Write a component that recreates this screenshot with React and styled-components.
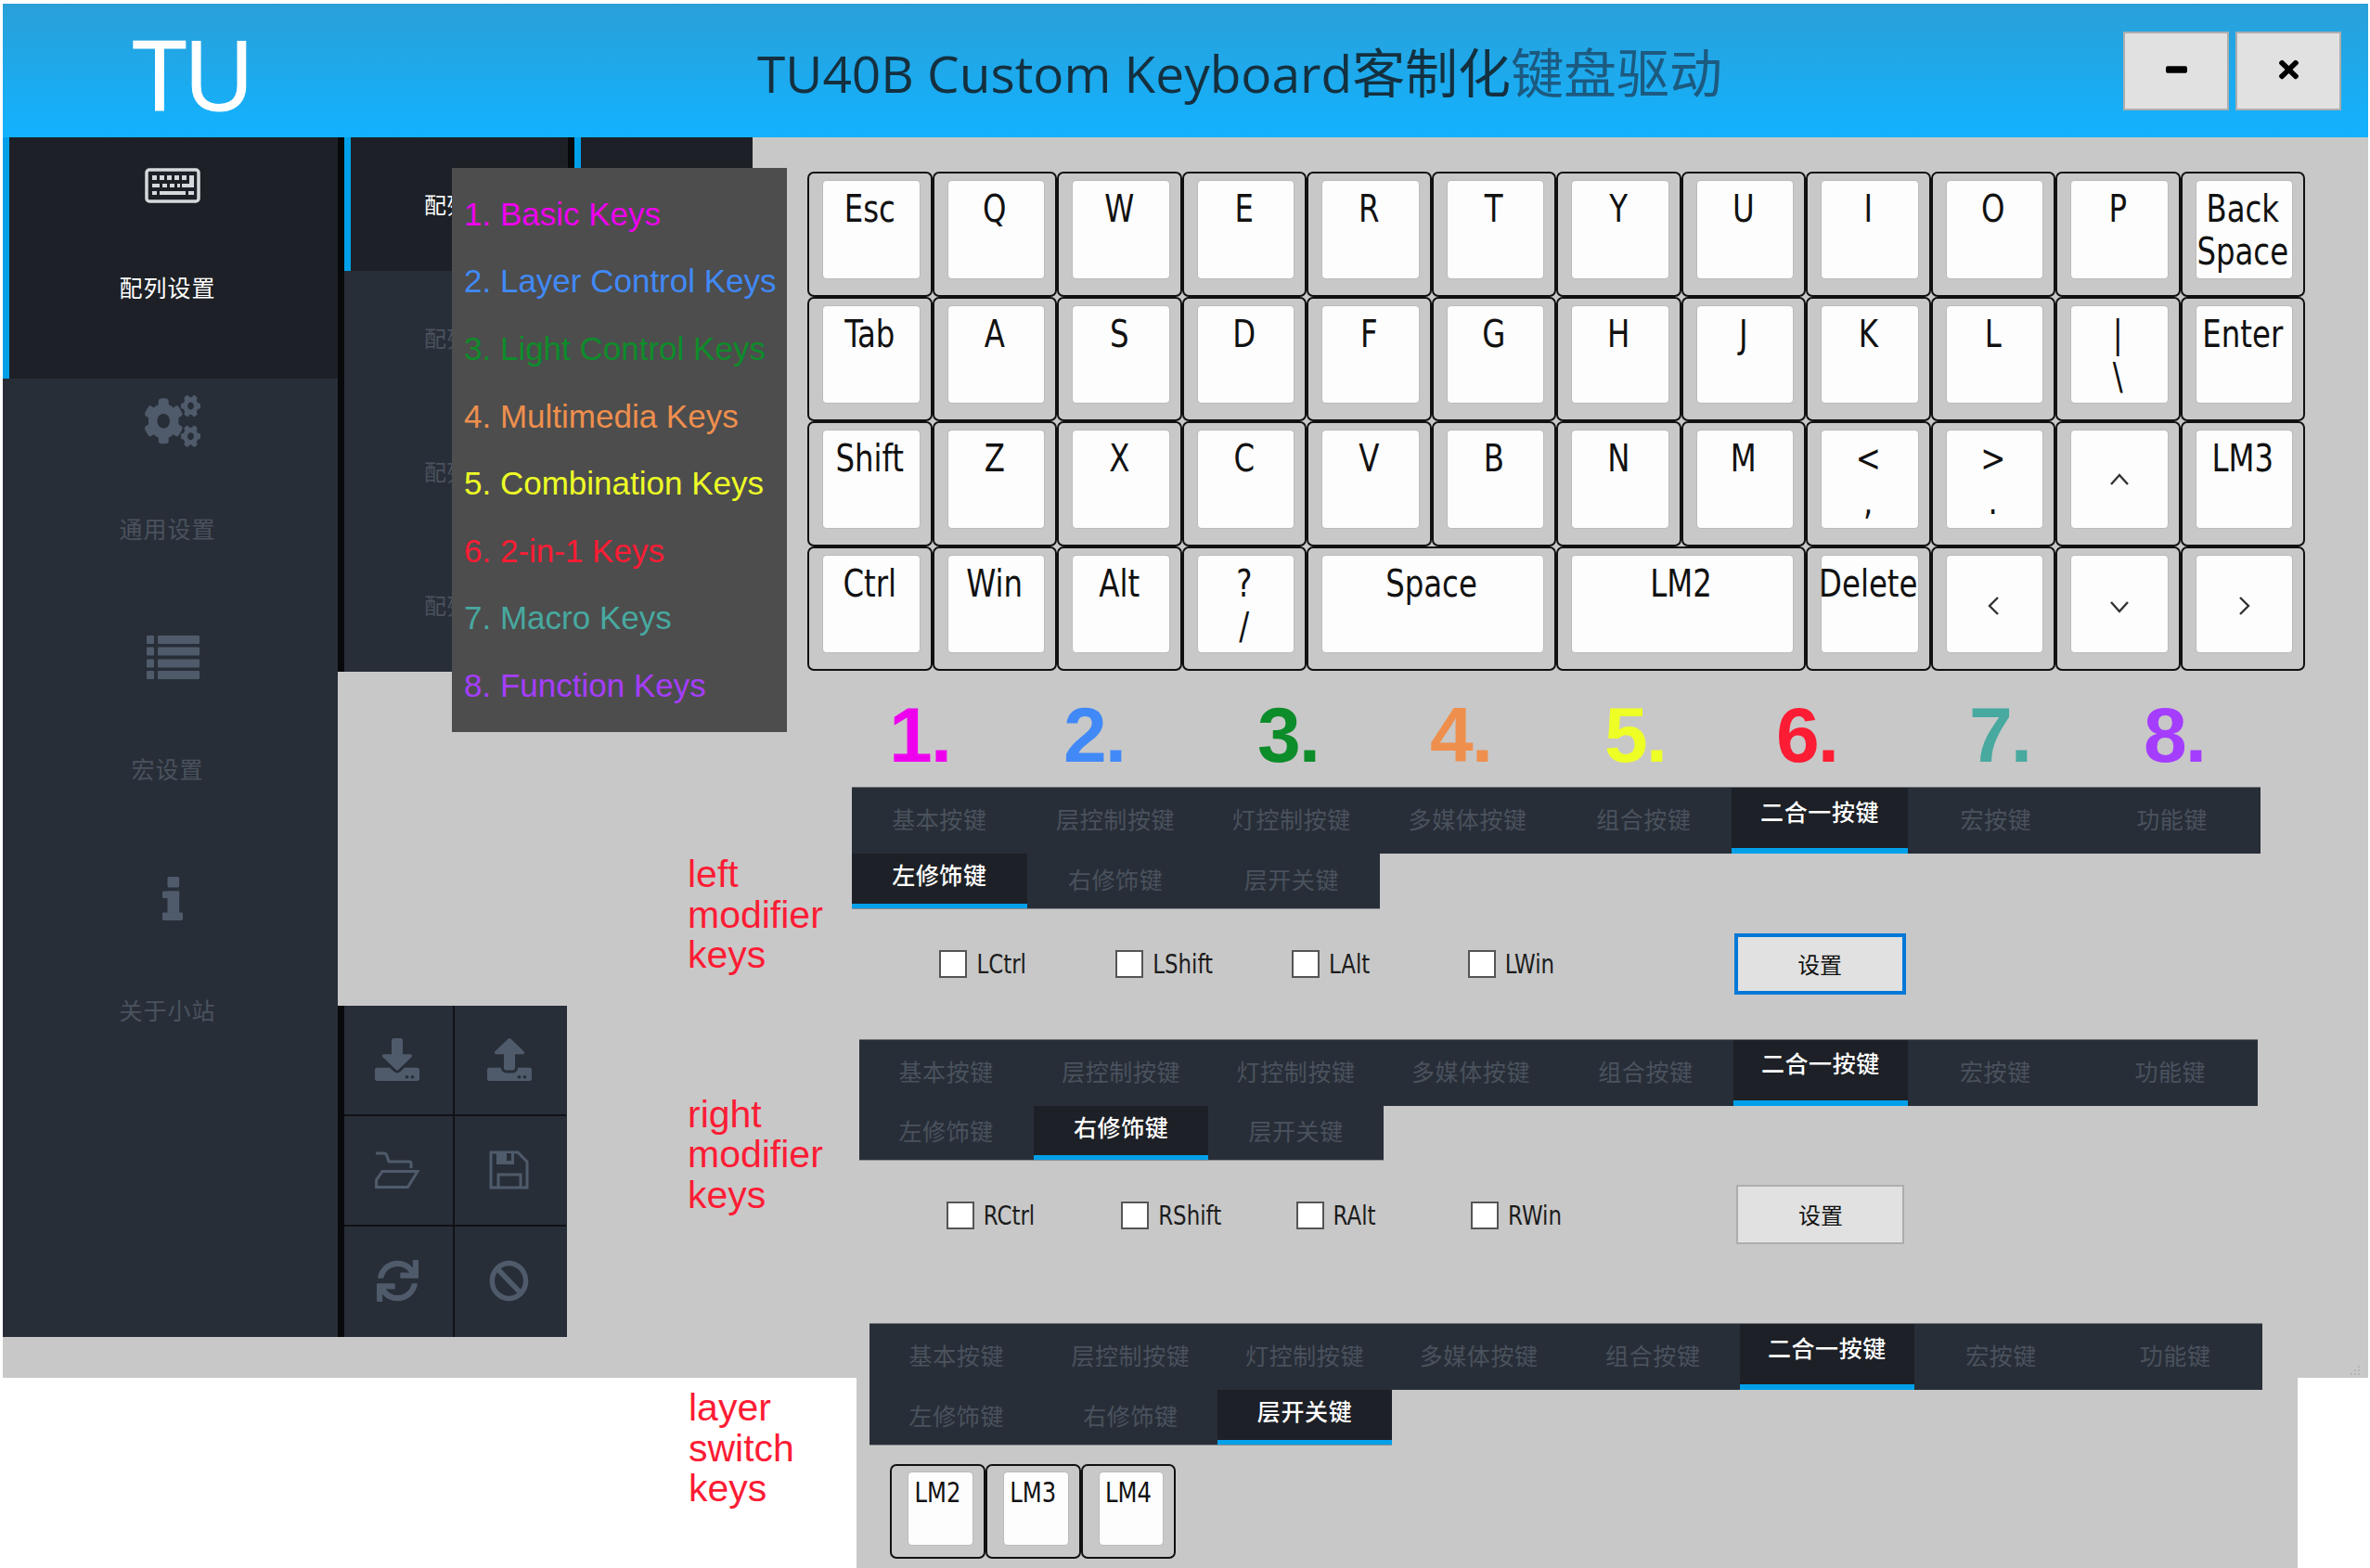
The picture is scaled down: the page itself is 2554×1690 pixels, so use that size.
import React from 'react';
import styled, { createGlobalStyle } from 'styled-components';
import { FaCogs, FaDownload, FaUpload, FaSync, FaBan, FaMinus, FaTimes } from 'react-icons/fa';

const GlobalStyle = createGlobalStyle`
  html, body { margin: 0; padding: 0; background: #fff; }
  * { box-sizing: border-box; }
`;

const GRAY = '#c8c8c8';
const PANEL = '#282e38';
const ACTIVE = '#1d2026';
const BLUE = '#00a0e9';
const MUTED = '#4a525d';
const CJK = '"Noto Sans CJK SC", sans-serif';
const KEYFONT = '"DejaVu Sans Condensed", "DejaVu Sans", "Noto Sans CJK SC", sans-serif';

const Page = styled.div`
  width: 2554px;
  height: 1690px;
  padding: 4px 2px 0 3px;
  background: #fff;
  overflow: hidden;
`;

const Window = styled.div`
  height: 1481px;
  background: ${GRAY};
  position: relative;
`;

const Grip = styled.svg`
  position: absolute;
  right: 8px;
  bottom: 2px;
  width: 12px;
  height: 12px;
`;

// title bar
const Header = styled.header`
  height: 144px;
  display: flex;
  align-items: center;
  background: linear-gradient(#2aa0d8, #12b2ff);
  padding-right: 29px;
`;

const Logo = styled.div`
  width: 813px;
  padding: 4px 0 0 140px;
  font: 400 105px/1 "Open Sans", sans-serif;
  letter-spacing: -3px;
  color: #fff;
  -webkit-text-stroke: 1px #fff;
`;

const Title = styled.h1`
  flex: 1;
  margin: 0;
  padding-top: 5px;
  font: 400 55px/1.2 "Open Sans", ${CJK};
  color: #14303f;
  white-space: nowrap;
`;

const TitleCjk = styled.span`
  font-size: 57px;
`;

const TitleFade = styled(TitleCjk)`
  color: #1c5a80;
`;

const WinButtons = styled.div`
  display: flex;
  gap: 7px;
`;

const WinButton = styled.button`
  width: 114px;
  height: 85px;
  display: flex;
  align-items: center;
  justify-content: center;
  background: #e1e1e1;
  border: 2px solid #adadad;
  padding: 0 0 3px;
  color: #000;
`;

const Body = styled.div`
  display: flex;
  position: relative;
  height: 1337px;
`;

const IconBox = styled.span`
  display: block;
  width: ${p => p.$w}px;
  height: ${p => p.$h}px;
  color: ${p => p.$color || '#4f5b6b'};
  svg { display: block; width: 100%; height: 100%; }
`;

const Strokes = styled.svg`
  fill: none;
  stroke: currentColor;
  stroke-width: ${p => p.$sw || 3};
`;

// FontAwesome 4 look: the newer package draws these differently
const KeyboardIcon = () => (
  <Strokes viewBox="0 0 60 38" $sw={3.5}>
    <rect x="2" y="2" width="56" height="34" rx="3" />
    <g fill="currentColor" stroke="none">
      <rect x="8" y="8" width="5" height="5" />
      <rect x="16" y="8" width="5" height="5" />
      <rect x="24" y="8" width="5" height="5" />
      <rect x="32" y="8" width="5" height="5" />
      <rect x="40" y="8" width="5" height="5" />
      <path d="M48 8h5v13H40v-4h8z" />
      <rect x="8" y="17" width="8" height="4" />
      <rect x="19" y="17" width="5" height="4" />
      <rect x="27" y="17" width="5" height="4" />
      <rect x="35" y="17" width="3" height="4" />
      <rect x="8" y="25" width="5" height="4" />
      <rect x="16" y="25" width="28" height="4" />
      <rect x="47" y="25" width="6" height="4" />
    </g>
  </Strokes>
);

const ListIcon = () => (
  <svg viewBox="0 0 57 47" fill="currentColor">
    {[0, 12.5, 25.5, 38].map(y => (
      <g key={y}>
        <rect x="0" y={y} width="8" height="9" rx="1" />
        <rect x="12" y={y} width="45" height="9" rx="1" />
      </g>
    ))}
  </svg>
);

const InfoIcon = () => (
  <svg viewBox="0 0 40 82" preserveAspectRatio="none" fill="currentColor">
    <rect x="10" y="0" width="23" height="20" rx="3" />
    <rect x="0" y="27" width="33" height="13" rx="2" />
    <rect x="10" y="27" width="23" height="55" />
    <rect x="0" y="67" width="40" height="15" rx="2" />
  </svg>
);

const FolderIcon = () => (
  <Strokes viewBox="0 0 48 40">
    <path d="M1 2H10Q12 2 13 5L15 11H37Q39 11 39 13V18" />
    <path d="M8 21.5H46L35.5 38.5H1.5V31Z" />
  </Strokes>
);

const SaveIcon = () => (
  <Strokes viewBox="0 0 43 42">
    <path d="M2 2H31L41 12V40H2Z" />
    <path d="M8 2H27V15H8Z" fill="currentColor" stroke="none" />
    <rect x="19" y="3" width="5" height="8" fill={PANEL} stroke="none" />
    <path d="M10 40V26H34V40" />
  </Strokes>
);

// far left menu
const Sidebar = styled.nav`
  width: 361px;
  height: 1293px;
  flex: none;
  background: ${PANEL};
`;

const SideItem = styled.div`
  height: ${p => (p.$active ? 260 : 259.4)}px;
  display: grid;
  grid-template-rows: 148px 26px;
  justify-items: center;
  background: ${p => (p.$active ? ACTIVE : 'transparent')};
  border-left: 7px solid ${p => (p.$active ? BLUE : 'transparent')};
`;

const SideIcon = styled.div`
  margin: ${p => p.$top}px 0 0 -2px;
`;

const SideLabel = styled.div`
  font: 400 25px/26px ${CJK};
  letter-spacing: 1px;
  margin-right: 13px;
  color: ${p => (p.$active ? '#fff' : MUTED)};
`;

// second column
const NavColumn = styled.div`
  width: 248px;
  height: 1293px;
  flex: none;
  display: flex;
  flex-direction: column;
  justify-content: space-between;
`;

const NavList = styled.div`
  border-left: 7px solid #08090a;
  background: ${PANEL};
`;

const NavItem = styled.div`
  height: 144px;
  display: flex;
  align-items: center;
  padding-left: ${p => (p.$active ? 79 : 86)}px;
  font: 400 24px/1 ${CJK};
  background: ${p => (p.$active ? ACTIVE : 'transparent')};
  border-left: ${p => (p.$active ? `7px solid ${BLUE}` : 'none')};
  color: ${p => (p.$active ? '#fff' : MUTED)};
`;

const ToolGrid = styled.div`
  height: 357px;
  margin-right: 1px;
  display: grid;
  grid-template-columns: 119px 120px;
  grid-template-rows: repeat(3, 1fr);
  border-left: 7px solid #08090a;
  background: ${PANEL};
`;

const ToolCell = styled.div`
  display: flex;
  align-items: center;
  justify-content: center;
  padding: 0 3px 2px 0;
  border-right: ${p => (p.$right ? 'none' : '2px solid #0f1115')};
  border-bottom: ${p => (p.$last ? 'none' : '2px solid #0f1115')};
`;

// everything right of the nav
const Content = styled.main`
  flex: 1;
  min-width: 0;
`;

const TopRow = styled.div`
  display: flex;
  align-items: flex-start;
`;

const SubTab = styled.div`
  width: 199px;
  height: 320px;
  flex: none;
  background: ${ACTIVE};
  border-left: 7px solid #08090a;
  box-shadow: inset 7px 0 0 ${BLUE};
`;

const Keyboard = styled.div`
  margin: 37px 0 0 59px;
  display: grid;
  grid-template-columns: repeat(${p => p.$cols}, ${p => p.$size}px);
  grid-auto-rows: ${p => p.$size}px;
  flex: none;
`;

const Key = styled.div`
  grid-column: span ${p => p.$span || 1};
  padding: ${p => (p.$small ? '7px 12px 13px 18px' : '8px 12px 18px 15px')};
  background: ${GRAY};
  border: 2.5px solid #111;
  border-radius: 7px;
`;

const Cap = styled.div`
  height: 100%;
  display: flex;
  align-items: ${p => (p.$arrow ? 'center' : 'flex-start')};
  justify-content: center;
  padding: ${p => (p.$arrow ? 4 : p.$small ? 4 : 7)}px ${p => (p.$arrow ? 0 : p.$small ? 6 : 3)}px 0 0;
  background: #fdfdfd;
  border-radius: 4px;
  box-shadow: 0 0 0 1px #bbb;
  font: 400 ${p => (p.$small ? 27 : 36)}px/${p => (p.$small ? 32 : 41)}px ${KEYFONT};
  color: #111;
  text-align: center;
  white-space: pre-line;
`;

// the screenshot's labels are a bit taller than any installed face
const Tall = styled.span`
  display: inline-block;
  transform: scaleY(1.12);
  transform-origin: 50% 0;
`;

const ChevronSvg = styled.svg`
  width: 20px;
  height: 20px;
  fill: none;
  stroke: #333;
  stroke-width: 2.4;
`;

const CHEVRON = {
  up: '1,14 10,4 19,14',
  down: '1,6 10,16 19,6',
  left: '14,1 5,10 14,19',
  right: '6,1 15,10 6,19',
};

const Chevron = ({ dir }) => (
  <ChevronSvg viewBox="0 0 20 20">
    <polyline points={CHEVRON[dir]} />
  </ChevronSvg>
);

// big coloured numbers
const Numbers = styled.div`
  display: flex;
  margin: 28px 0 0 346px;
`;

const Number = styled.div`
  width: ${p => p.$w}px;
  flex: none;
  font: 700 84px/82px "Liberation Sans", sans-serif;
  letter-spacing: -2px;
  color: ${p => p.$color};
`;

const Section = styled.section`
  display: flex;
  align-items: flex-start;
  margin-top: ${p => p.$top}px;
`;

const Note = styled.div`
  flex: none;
  width: ${p => p.$w}px;
  margin: ${p => p.$top}px 0 0 ${p => p.$left}px;
  font: 400 41px/43.5px "Liberation Sans", sans-serif;
  color: #fc1c34;
`;

const Block = styled.div`
  width: ${p => p.$w}px;
  flex: none;
`;

const Sheet = styled.div`
  flex: none;
  width: 1553px;
  height: 270px;
  padding-left: 14px;
  background: ${GRAY};
`;

const TabRow = styled.div`
  width: ${p => p.$w}px;
  height: ${p => p.$h}px;
  display: grid;
  grid-template-columns: repeat(${p => p.$cols}, 1fr);
  background: ${PANEL};
  box-shadow: ${p => (p.$first ? '0 -1px 0 #6e7278' : '0 1px 0 #8a8d92')};
`;

const Tab = styled.div`
  display: flex;
  align-items: center;
  justify-content: center;
  font: ${p => (p.$active ? 500 : 400)} 25px/1 ${CJK};
  letter-spacing: 0.6px;
  white-space: nowrap;
  color: ${p => (p.$active ? '#fff' : MUTED)};
  background: ${p => (p.$active ? ACTIVE : 'transparent')};
  padding-bottom: ${p => (p.$active ? p.$pad : 4)}px;
  border-bottom: ${p => (p.$active ? `${p.$bar}px solid ${BLUE}` : 'none')};
`;

const OptionRow = styled.div`
  margin-top: 27px;
  height: 66px;
  display: grid;
  grid-template-columns: repeat(8, 1fr);
  align-items: center;
`;

const Option = styled.div`
  display: flex;
  align-items: center;
  gap: 10px;
  padding-left: 50%;
  font: 400 25.5px/30px ${KEYFONT};
  color: #1c1c1c;
`;

const OptionText = styled(Tall)`
  transform-origin: 50% 40%;
`;

const Box = styled.span`
  width: 30px;
  height: 30px;
  flex: none;
  background: #fff;
  border: 2.5px solid #555;
`;

const SetButton = styled.button`
  grid-column: 6;
  justify-self: center;
  align-self: start;
  width: ${p => (p.$focus ? 185 : 181)}px;
  height: ${p => (p.$focus ? 66 : 64)}px;
  background: #e1e1e1;
  border: ${p => (p.$focus ? '4px solid #0078d7' : '2px solid #adadad')};
  padding: 0;
  font: 400 24px/1 ${CJK};
  color: #111;
`;

const LayerKeys = styled(Keyboard)`
  margin: 21px 0 0 22px;
`;

const sideItems = [
  { label: '配列设置', icon: KeyboardIcon, w: 60, h: 38, top: 33, active: true, color: '#d5d9dc' },
  { label: '通用设置', icon: FaCogs, w: 60, h: 56, top: 18 },
  { label: '宏设置', icon: ListIcon, w: 57, h: 47, top: 18 },
  { label: '关于小站', icon: InfoIcon, w: 22, h: 47, top: 18 },
];

const tools = [
  { icon: FaDownload, w: 48, h: 46 },
  { icon: FaUpload, w: 48, h: 46 },
  { icon: FolderIcon, w: 48, h: 40 },
  { icon: SaveIcon, w: 43, h: 42 },
  { icon: FaSync, w: 45, h: 45 },
  { icon: FaBan, w: 43, h: 45 },
];

const legend = [
  ['1. Basic Keys', '#ee00ee'],
  ['2. Layer Control Keys', '#4189f7'],
  ['3. Light Control Keys', '#0d8c2a'],
  ['4. Multimedia Keys', '#ef8f4e'],
  ['5. Combination Keys', '#eeff26'],
  ['6. 2-in-1 Keys', '#fc1c34'],
  ['7. Macro Keys', '#47a9a0'],
  ['8. Function Keys', '#a53dff'],
];

const Popup = styled.div`
  position: absolute;
  left: 484px;
  top: 33px;
  width: 361px;
  height: 608px;
  padding: 13px 0 0 13px;
  background: #4d4d4d;
`;

const PopupRow = styled.div`
  height: 72.6px;
  display: flex;
  align-items: center;
  font: 400 35px/1 "Liberation Sans", sans-serif;
  white-space: nowrap;
  color: ${p => p.$color};
`;

const keys = [
  ['Esc'], ['Q'], ['W'], ['E'], ['R'], ['T'], ['Y'], ['U'], ['I'], ['O'], ['P'], ['Back\nSpace'],
  ['Tab'], ['A'], ['S'], ['D'], ['F'], ['G'], ['H'], ['J'], ['K'], ['L'], ['|\n\\'], ['Enter'],
  ['Shift'], ['Z'], ['X'], ['C'], ['V'], ['B'], ['N'], ['M'], ['<\n,'], ['>\n.'], [null, 1, 'up'], ['LM3'],
  ['Ctrl'], ['Win'], ['Alt'], ['?\n/'], ['Space', 2], ['LM2', 2], ['Delete'],
  [null, 1, 'left'], [null, 1, 'down'], [null, 1, 'right'],
];

const numbers = [
  ['1.', '#ee00ee', 188], ['2.', '#4189f7', 209], ['3.', '#0d8c2a', 186], ['4.', '#ef8f4e', 188],
  ['5.', '#eeff26', 185], ['6.', '#fc1c34', 208], ['7.', '#47a9a0', 188], ['8.', '#a53dff', 100],
];

const TOP_TABS = ['基本按键', '层控制按键', '灯控制按键', '多媒体按键', '组合按键', '二合一按键', '宏按键', '功能键'];
const SUB_TABS = ['左修饰键', '右修饰键', '层开关键'];

const TabPanel = ({ width, subActive }) => (
  <div>
    <TabRow $first $w={width} $h={71} $cols={8}>
      {TOP_TABS.map((t, i) => (
        <Tab key={t} $active={i === 5} $pad={15} $bar={6}>{t}</Tab>
      ))}
    </TabRow>
    <TabRow $w={(width * 3) / 8} $h={58.5} $cols={3}>
      {SUB_TABS.map((t, i) => (
        <Tab key={t} $active={i === subActive} $pad={8} $bar={5}>{t}</Tab>
      ))}
    </TabRow>
  </div>
);

const Options = ({ names, focus }) => (
  <OptionRow>
    {names.map(n => (
      <Option key={n}><Box /><OptionText>{n}</OptionText></Option>
    ))}
    <SetButton $focus={focus}>设置</SetButton>
  </OptionRow>
);

const App = () => (
  <Page>
    <GlobalStyle />
    <Window>
      <Header>
        <Logo>TU</Logo>
        <Title>TU40B Custom Keyboard<TitleCjk>客制化</TitleCjk><TitleFade>键盘驱动</TitleFade></Title>
        <WinButtons>
          <WinButton><IconBox $w={23} $h={40} $color="#000"><FaMinus preserveAspectRatio="none" /></IconBox></WinButton>
          <WinButton><IconBox $w={21} $h={30} $color="#000"><FaTimes preserveAspectRatio="none" /></IconBox></WinButton>
        </WinButtons>
      </Header>
      <Body>
        <Sidebar>
          {sideItems.map(({ label, icon: Icon, w, h, top, active, color }) => (
            <SideItem key={label} $active={active}>
              <SideIcon $top={top}>
                <IconBox $w={w} $h={h} $color={color}><Icon preserveAspectRatio="none" /></IconBox>
              </SideIcon>
              <SideLabel $active={active}>{label}</SideLabel>
            </SideItem>
          ))}
        </Sidebar>
        <NavColumn>
          <NavList>
            <NavItem $active>配列1</NavItem>
            <NavItem>配列2</NavItem>
            <NavItem>配列3</NavItem>
            <NavItem>配列4</NavItem>
          </NavList>
          <ToolGrid>
            {tools.map(({ icon: Icon, w, h }, i) => (
              <ToolCell key={i} $right={i % 2 === 1} $last={i > 3}>
                <IconBox $w={w} $h={h}><Icon preserveAspectRatio="none" /></IconBox>
              </ToolCell>
            ))}
          </ToolGrid>
        </NavColumn>
        <Content>
          <TopRow>
            <SubTab />
            <Keyboard $cols={12} $size={134.5}>
              {keys.map(([label, span, arrow], i) => (
                <Key key={i} $span={span}>
                  <Cap $arrow={!!arrow}>{arrow ? <Chevron dir={arrow} /> : <Tall>{label}</Tall>}</Cap>
                </Key>
              ))}
            </Keyboard>
          </TopRow>
          <Numbers>
            {numbers.map(([n, color, w]) => (
              <Number key={n} $color={color} $w={w}>{n}</Number>
            ))}
          </Numbers>
          <Section $top={16}>
            <Note $w={176.5} $left={129} $top={72}>left<br />modifier<br />keys</Note>
            <Block $w={1518}>
              <TabPanel width={1518} subActive={0} />
              <Options names={['LCtrl', 'LShift', 'LAlt', 'LWin']} focus />
            </Block>
          </Section>
          <Section $top={49}>
            <Note $w={184.5} $left={129} $top={59}>right<br />modifier<br />keys</Note>
            <Block $w={1507.5}>
              <TabPanel width={1507.5} subActive={1} />
              <Options names={['RCtrl', 'RShift', 'RAlt', 'RWin']} />
            </Block>
          </Section>
          <Section $top={84}>
            <Note $w={181} $left={130} $top={69}>layer<br />switch<br />keys</Note>
            <Sheet>
              <TabPanel width={1501} subActive={2} />
              <LayerKeys $cols={3} $size={102.8}>
                {['LM2', 'LM3', 'LM4'].map(k => (
                  <Key key={k} $small><Cap $small><Tall>{k}</Tall></Cap></Key>
                ))}
              </LayerKeys>
            </Sheet>
          </Section>
        </Content>
        <Popup>
          {legend.map(([text, color]) => (
            <PopupRow key={text} $color={color}>{text}</PopupRow>
          ))}
        </Popup>
      </Body>
      <Grip viewBox="0 0 12 12" fill="#b4b4b4">
        <rect x="9" y="1" width="2" height="2" />
        <rect x="5" y="5" width="2" height="2" />
        <rect x="9" y="5" width="2" height="2" />
        <rect x="1" y="9" width="2" height="2" />
        <rect x="5" y="9" width="2" height="2" />
        <rect x="9" y="9" width="2" height="2" />
      </Grip>
    </Window>
  </Page>
);

export default App;
